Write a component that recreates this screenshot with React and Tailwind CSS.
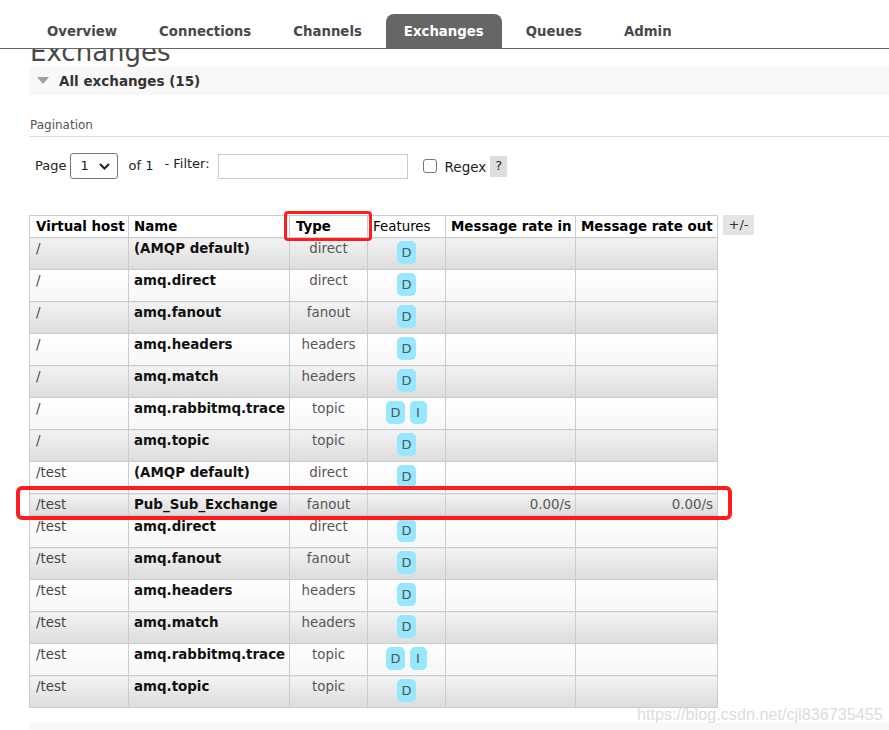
// App.jsx — RabbitMQ management "Exchanges" page with red annotation boxes

const tabs = ['Overview', 'Connections', 'Channels', 'Exchanges', 'Queues', 'Admin'];

const rows = [
  ['/', '(AMQP default)', 'direct', ['D']],
  ['/', 'amq.direct', 'direct', ['D']],
  ['/', 'amq.fanout', 'fanout', ['D']],
  ['/', 'amq.headers', 'headers', ['D']],
  ['/', 'amq.match', 'headers', ['D']],
  ['/', 'amq.rabbitmq.trace', 'topic', ['D', 'I']],
  ['/', 'amq.topic', 'topic', ['D']],
  ['/test', '(AMQP default)', 'direct', ['D']],
  ['/test', 'Pub_Sub_Exchange', 'fanout', [], '0.00/s', '0.00/s'],
  ['/test', 'amq.direct', 'direct', ['D']],
  ['/test', 'amq.fanout', 'fanout', ['D']],
  ['/test', 'amq.headers', 'headers', ['D']],
  ['/test', 'amq.match', 'headers', ['D']],
  ['/test', 'amq.rabbitmq.trace', 'topic', ['D', 'I']],
  ['/test', 'amq.topic', 'topic', ['D']],
];

function Triangle() {
  return (
    <svg width="12" height="8" viewBox="0 0 12 8" className="shrink-0">
      <path d="M0 0 L12 0 L6 7 Z" fill="#a0a0a0" />
    </svg>
  );
}

function Badge({ children }) {
  return (
    <span className="inline-flex items-center justify-center h-[23px] min-w-[17px] px-[4px] rounded-[5px] bg-[#96e8ff] text-[13px] text-[#555]">
      {children}
    </span>
  );
}

export default function App() {
  return (
    <div className="relative h-[730px] w-[889px] overflow-hidden bg-white font-['DejaVu_Sans',Verdana,sans-serif]">
      {/* Nav tabs */}
      <div className="relative z-10 bg-white pt-[14px] pl-[29px] flex gap-[6px] border-b border-[#666]">
        {tabs.map((t) => (
          <div
            key={t}
            className={`h-[34px] px-[18px] pt-[2px] flex items-center text-[13.3px] font-bold rounded-t-[8px] ${
              t === 'Exchanges' ? 'bg-[#666] text-white' : 'text-[#484848]'
            }`}
          >
            {t}
          </div>
        ))}
      </div>

      <div className="pl-[29px]">
        {/* Page heading, tucked under the nav */}
        <h1 className="-mt-[10px] mb-[2px] pl-[1px] text-[26px] leading-[26px] text-[#484848]">Exchanges</h1>

        {/* All exchanges bar */}
        <div className="h-[28px] bg-[#f8f8f8] flex items-center gap-[10px] pl-[8px]">
          <Triangle />
          <span className="text-[13.5px] font-bold text-[#333]">All exchanges (15)</span>
        </div>

        {/* Pagination */}
        <div className="mt-[22px] pl-[1px] text-[12px] text-[#555] leading-[16px] pb-[3px] border-b border-[#ddd]">
          Pagination
        </div>

        <div className="mt-[16px] pl-[6px] flex items-center h-[26px] text-[13px] text-[#222]">
          <span>Page</span>
          <div className="ml-[4px] w-[48px] h-[26px] border border-[#767676] rounded-[3px] flex items-center pl-[9px] gap-[10px]">
            <span>1</span>
            <svg width="11" height="7" viewBox="0 0 11 7">
              <path d="M1 1 L5.5 5.5 L10 1" stroke="#222" strokeWidth="2" fill="none" />
            </svg>
          </div>
          <span className="ml-[10px]">of 1</span>
          <span className="ml-[11px] -mt-[4px]">- Filter:</span>
          <div className="ml-[8px] w-[190px] h-[25px] border border-[#ccc]" />
          <div className="ml-[15px] w-[14px] h-[14px] border border-[#767676] rounded-[3px]" />
          <span className="ml-[8px] mt-[2px] text-[13.5px]">Regex</span>
          <span className="ml-[4px] w-[17px] h-[21px] bg-[#ddd] flex items-center justify-center">?</span>
        </div>

        {/* Table + column toggle */}
        <div className="mt-[36px] flex items-start gap-[5px]">
          <table className="table-fixed w-[688px] border-collapse border border-[#ccc] text-[13.4px]">
            <colgroup>
              <col className="w-[99px]" />
              <col className="w-[161px]" />
              <col className="w-[78px]" />
              <col className="w-[78px]" />
              <col className="w-[130px]" />
              <col className="w-[142px]" />
            </colgroup>
            <thead>
              <tr className="h-[22px] text-black">
                <th className="border border-[#ccc] text-left font-bold pl-[6px] pt-[1px] p-0">Virtual host</th>
                <th className="border border-[#ccc] text-left font-bold pl-[5px] pt-[1px] p-0">Name</th>
                <th className="border border-[#ccc] text-left font-bold pl-[6px] pt-[1px] p-0">Type</th>
                <th className="border border-[#ccc] text-left font-normal pl-[5px] pt-[1px] p-0">Features</th>
                <th className="border border-[#ccc] text-left font-bold pl-[5px] pt-[1px] p-0">Message rate in</th>
                <th className="border border-[#ccc] text-left font-bold pl-[5px] pt-[1px] p-0">Message rate out</th>
              </tr>
            </thead>
            <tbody>
              {rows.map(([vh, name, type, feats, rin, rout], i) => {
                const bg =
                  i % 2 === 0
                    ? 'bg-linear-to-b from-[#f3f3f3] to-[#dcdcdc]'
                    : 'bg-linear-to-b from-white to-[#f6f6f6]';
                const cell = `border border-[#ccc] align-top pt-[2px] leading-[18px] ${bg}`;
                return (
                  <tr key={i} className={feats.length ? 'h-[32px]' : 'h-[22px]'}>
                    <td className={`${cell} pl-[6px] text-[#444]`}>{vh}</td>
                    <td className={`${cell} pl-[5px] font-bold text-[#111] whitespace-nowrap`}>{name}</td>
                    <td className={`${cell} text-center text-[#555]`}>{type}</td>
                    <td className={`${cell} text-center`}>
                      <div className="flex justify-center gap-[5px] pt-[1px]">
                        {feats.map((f) => (
                          <Badge key={f}>{f}</Badge>
                        ))}
                      </div>
                    </td>
                    <td className={`${cell} text-right pr-[4px] text-[#555]`}>{rin}</td>
                    <td className={`${cell} text-right pr-[4px] text-[#555]`}>{rout}</td>
                  </tr>
                );
              })}
            </tbody>
          </table>
          <div className="w-[31px] h-[20px] bg-[#e4e4e4] flex items-center justify-center text-[13px] text-[#333]">+/-</div>
        </div>

        {/* Next section bar, mostly below the fold */}
        <div className="mt-[15px] h-[28px] bg-[#f7f7f7] flex items-center gap-[10px] pl-[8px]">
          <Triangle />
          <span className="text-[13.5px] font-bold text-[#333]">Add a new exchange</span>
        </div>
      </div>

      {/* Red annotation boxes */}
      <div className="absolute left-[284px] top-[211px] w-[88px] h-[30px] border-[3px] border-[#ff1c1c] rounded-[4px] pointer-events-none" />
      <div className="absolute left-[16px] top-[486px] w-[716px] h-[34px] border-[4px] border-[#ff1c1c] rounded-[6px] pointer-events-none" />

      {/* Watermark */}
      <div className="absolute left-[637px] top-[702px] text-[16.2px] text-[#dcdcdc] font-['Liberation_Sans',Arial,sans-serif]">
        https://blog.csdn.net/cjl836735455
      </div>
    </div>
  );
}
